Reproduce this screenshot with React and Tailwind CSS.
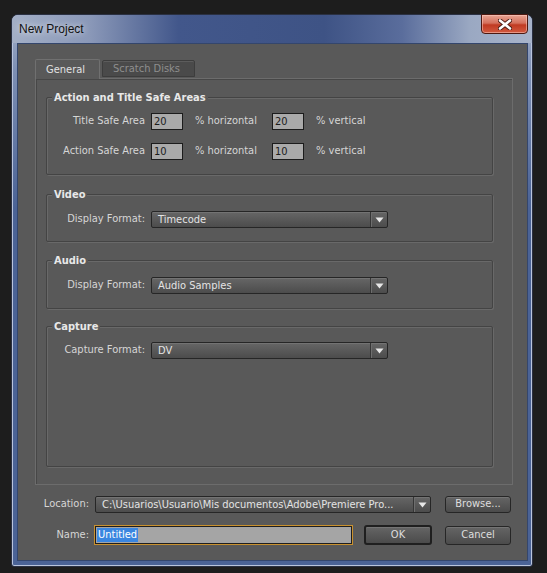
const Field = ({ value }) => (
  <div className="w-[32px] h-[17px] bg-[#aaaaaa] border border-[#1c1c1c] text-[#1c1c1c] pl-[2px] leading-[15px]">
    {value}
  </div>
);

const Arrow = () => (
  <svg width="9" height="6" viewBox="0 0 9 6">
    <path d="M0.5 0.5 H8.5 L4.5 5.5 Z" fill="#e8e8e8" />
  </svg>
);

const Dropdown = ({ value, className }) => (
  <div
    className={`flex h-[17px] border border-[#262626] rounded-[2px] bg-gradient-to-b from-[#666666] to-[#4c4c4c] shadow-[inset_0_1px_0_#737373] text-[#e4e4e4] ${className}`}
  >
    <span className="flex-1 pl-[6px] leading-[15px] whitespace-nowrap overflow-hidden">
      {value}
    </span>
    <span className="w-[17px] flex items-center justify-center border-l border-[#363636] shadow-[inset_1px_0_0_#6e6e6e]">
      <Arrow />
    </span>
  </div>
);

const Group = ({ title, children, className = "" }) => (
  <fieldset
    className={`border border-[#444444] rounded-[2px] shadow-[inset_1px_1px_0_#696969,1px_1px_0_#696969] pl-[8px] ${className}`}
  >
    <legend className="-ml-[3px] px-[2px] bg-[#595959] font-bold text-[#e8e8e8] leading-[13px]">
      {title}
    </legend>
    {children}
  </fieldset>
);

const Button = ({ children, className = "" }) => (
  <div
    className={`flex items-center justify-center rounded-[3px] bg-gradient-to-b from-[#656565] to-[#4b4b4b] shadow-[inset_0_1px_0_#747474] text-[#dedede] ${className}`}
  >
    {children}
  </div>
);

export default function App() {
  return (
    <div className="w-[547px] h-[573px] bg-[#1d1d1d] pt-[14px] pl-[11px] overflow-hidden font-['DejaVu_Sans_Condensed',Tahoma,sans-serif] text-[11px] text-[#d6d6d6]">
      <div className="relative w-[522px] h-[553px] flex flex-col rounded-t-[7px] rounded-b-[3px] border border-[#2a3042] bg-[linear-gradient(180deg,#a4b0c8_0%,#7d8fb4_10%,#4b6396_35%,#4b6396_100%)] shadow-[inset_0_0_0_1px_#b9c4dc]">
        {/* Title bar */}
        <div className="h-[28px] flex items-center pl-[7px] rounded-t-[6px] bg-[linear-gradient(90deg,#a3afc6_0%,#8a98b8_15%,#42578b_32%,#3e5385_60%,#5a6d9c_75%,#9aa8c2_88%,#a8b4ca_100%)]">
          <span className="font-['Liberation_Sans',Arial,sans-serif] text-[12px] text-[#111111] [text-shadow:0_0_6px_rgba(255,255,255,0.9)]">
            New Project
          </span>
        </div>
        <div className="absolute -top-px right-[4px] w-[47px] h-[20px] rounded-b-[4px] border border-[#4c1810] bg-[linear-gradient(180deg,#e8a493_0%,#d4705c_45%,#c03a22_55%,#d25a40_100%)] shadow-[inset_0_0_0_1px_rgba(255,210,200,0.5)] flex items-center justify-center">
          <svg width="14" height="11" viewBox="0 0 14 11">
            <path d="M2 1.5 L12 9.5 M12 1.5 L2 9.5" stroke="#4a1a12" strokeWidth="4.4" strokeLinecap="round" />
            <path d="M2 1.5 L12 9.5 M12 1.5 L2 9.5" stroke="#ffffff" strokeWidth="2.6" strokeLinecap="round" />
          </svg>
        </div>

        {/* Content */}
        <div className="flex-1 ml-[5px] mr-[4px] mb-[5px] bg-[#595959] border border-[#34466c] flex flex-col">
          <div className="ml-[17px] mr-[14px] mt-[15px] flex flex-col">
            {/* Tabs */}
            <div className="flex items-end">
              <div className="relative z-10 -mb-px h-[20px] w-[65px] pl-[10px] leading-[19px] bg-[#595959] border border-b-0 border-[#707070] rounded-t-[2px] text-[#e2e2e2]">
                General
              </div>
              <div className="mb-px ml-[2px] h-[17px] w-[93px] pl-[10px] leading-[16px] bg-[#4a4a4a] border border-[#3d3d3d] shadow-[inset_0_1px_0_#5c5c5c] rounded-t-[2px] text-[#8e8e8e]">
                Scratch Disks
              </div>
            </div>

            {/* Panel */}
            <div className="h-[407px] border border-[#6c6c6c] shadow-[inset_1px_1px_0_#474747] pl-[10px] pr-[19px] pt-[12px] pb-[17px] flex flex-col">
              <Group title="Action and Title Safe Areas" className="pt-[9px] pb-[14px]">
                <div className="flex flex-col gap-[13px]">
                  <div className="flex items-center">
                    <span className="w-[90px] text-right">Title Safe Area</span>
                    <span className="ml-[6px]"><Field value="20" /></span>
                    <span className="ml-[12px] w-[77px]">% horizontal</span>
                    <Field value="20" />
                    <span className="ml-[12px]">% vertical</span>
                  </div>
                  <div className="flex items-center">
                    <span className="w-[90px] text-right">Action Safe Area</span>
                    <span className="ml-[6px]"><Field value="10" /></span>
                    <span className="ml-[12px] w-[77px]">% horizontal</span>
                    <Field value="10" />
                    <span className="ml-[12px]">% vertical</span>
                  </div>
                </div>
              </Group>

              <Group title="Video" className="mt-[13px] pt-[10px] pb-[13px]">
                <div className="flex items-center">
                  <span className="w-[90px] text-right">Display Format:</span>
                  <Dropdown value="Timecode" className="ml-[6px] w-[237px]" />
                </div>
              </Group>

              <Group title="Audio" className="mt-[12px] pt-[10px] pb-[14px]">
                <div className="flex items-center">
                  <span className="w-[90px] text-right">Display Format:</span>
                  <Dropdown value="Audio Samples" className="ml-[6px] w-[237px]" />
                </div>
              </Group>

              <Group title="Capture" className="mt-[11px] pt-[9px] flex-1">
                <div className="flex items-center">
                  <span className="w-[90px] text-right">Capture Format:</span>
                  <Dropdown value="DV" className="ml-[6px] w-[237px]" />
                </div>
              </Group>
            </div>
          </div>

          {/* Location row */}
          <div className="mt-[11px] flex items-center">
            <span className="w-[71px] text-right">Location:</span>
            <Dropdown
              value="C:\Usuarios\Usuario\Mis documentos\Adobe\Premiere Pro..."
              className="ml-[6px] w-[336px]"
            />
            <Button className="ml-[14px] w-[66px] h-[17px] border border-[#262626]">Browse...</Button>
          </div>

          {/* Name row */}
          <div className="mt-[12px] flex items-center">
            <span className="w-[71px] text-right">Name:</span>
            <div className="ml-[5px] w-[259px] h-[20px] border border-[#c9912e] bg-[#a5a5a5] shadow-[inset_0_0_0_1px_#1e1e1e] pl-[2px] flex items-center">
              <span className="bg-[#3a86e0] text-white leading-[14px] px-px">Untitled</span>
            </div>
            <Button className="ml-[11px] w-[68px] h-[20px] border-2 border-[#1f1f1f]">OK</Button>
            <Button className="ml-[13px] w-[66px] h-[19px] border border-[#262626]">Cancel</Button>
          </div>
        </div>
      </div>
    </div>
  );
}
